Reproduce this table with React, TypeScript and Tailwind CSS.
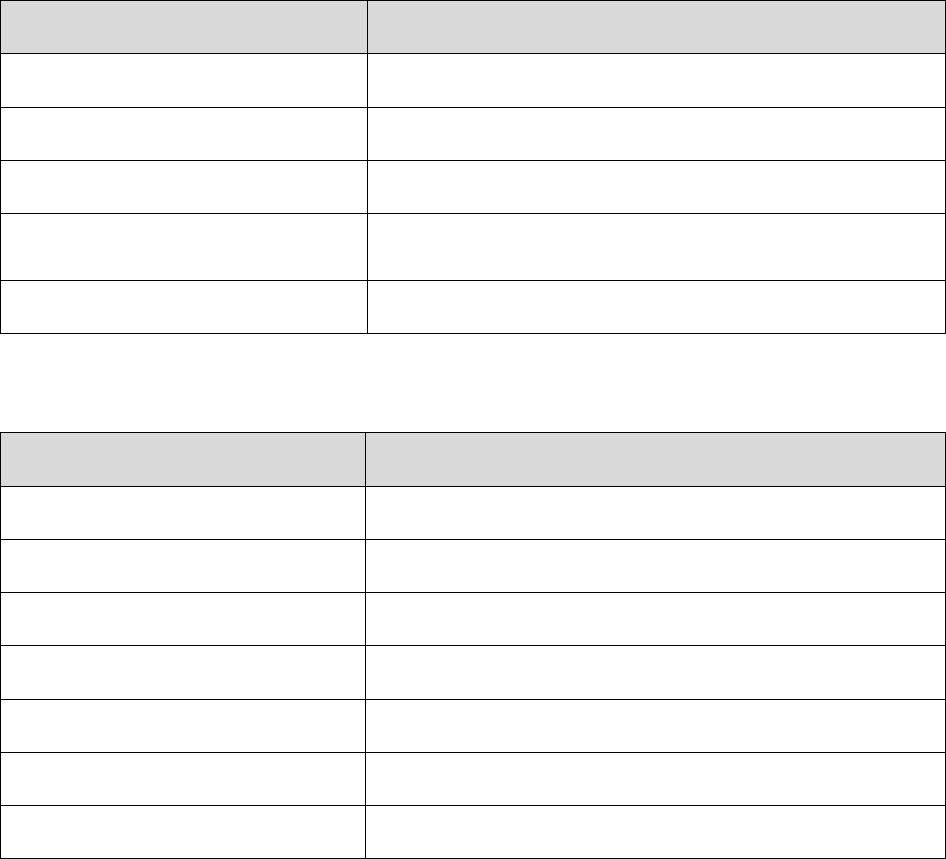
import React from "react";

type GridTableProps = {
  firstCol: string;
  rows: string[];
  className?: string;
};

// Header gets the grey fill, the rest are blank white rows.
const GridTable: React.FC<GridTableProps> = ({ firstCol, rows, className }) => {
  return (
    <div className={`w-[946px] border border-black ${className ?? ""}`}>
      {rows.map((h, i) => (
        <div
          key={i}
          className={`flex ${h} ${i < rows.length - 1 ? "border-b border-black" : ""} ${
            i === 0 ? "bg-[#d9d9d9]" : "bg-white"
          }`}
        >
          <div className={`h-full border-r border-black ${firstCol}`}></div>
          <div className="h-full flex-1"></div>
        </div>
      ))}
    </div>
  );
};

export default function App() {
  return (
    <div className="w-[946px] bg-white font-['Liberation_Sans',Arial,sans-serif]">
      <GridTable
        firstCol="w-[367px]"
        rows={["h-[53px]", "h-[54px]", "h-[53px]", "h-[53px]", "h-[67px]", "h-[52px]"]}
      />
      <GridTable
        firstCol="w-[365px]"
        rows={[
          "h-[54px]",
          "h-[53px]",
          "h-[53px]",
          "h-[53px]",
          "h-[54px]",
          "h-[53px]",
          "h-[53px]",
          "h-[52px]",
        ]}
        className="mt-[98px]"
      />
    </div>
  );
}
